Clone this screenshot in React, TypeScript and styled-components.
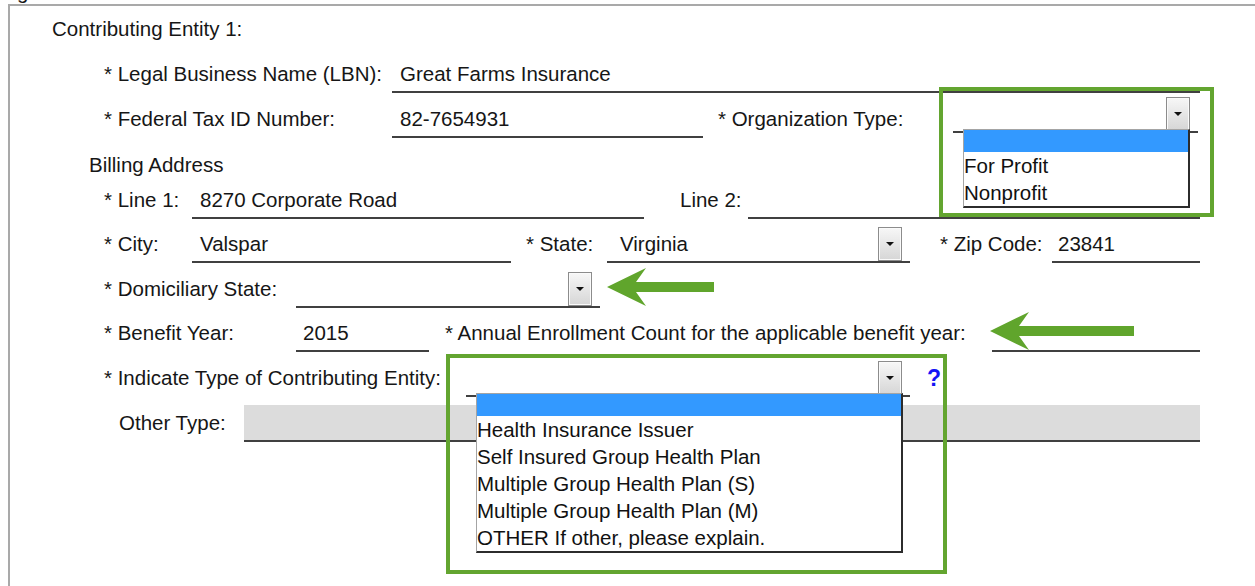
import styled, { createGlobalStyle } from "styled-components";

const GlobalStyle = createGlobalStyle`
  *, *::before, *::after {
    box-sizing: border-box;
  }

  html,
  body {
    margin: 0;
    background: #ffffff;
    overflow: hidden;
  }

  body {
    font-family: "Liberation Sans", Arial, sans-serif;
    font-size: 20.5px;
    color: #161616;
  }
`;

const Page = styled.div`
  position: relative;
  width: 1255px;
  height: 586px;
  overflow: hidden;
`;

// tail of the page heading, cut off by the top of the view
const TopStrip = styled.div`
  height: 4px;
  overflow: hidden;
  padding-left: 17px;
  line-height: 24px;

  span {
    display: block;
    margin-top: -20px;
  }
`;

const Frame = styled.div`
  position: relative;
  margin-left: 8px;
  width: 1300px;
  height: 620px;
  border-top: 2px solid #a9a9a9;
  border-left: 2px solid #a9a9a9;
`;

const Row = styled.div<{ $h: number; $indent: number }>`
  display: flex;
  align-items: flex-end;
  height: ${(p) => p.$h}px;
  padding-left: ${(p) => p.$indent}px;
`;

const Label = styled.div<{ $w?: number; $gap?: number }>`
  flex: none;
  width: ${(p) => (p.$w ? `${p.$w}px` : "auto")};
  margin-left: ${(p) => p.$gap ?? 0}px;
  line-height: 24px;
  padding-bottom: 5px;
  border-bottom: 2px solid transparent;
  white-space: nowrap;
`;

const Input = styled.div<{ $w: number; $pad?: number }>`
  flex: none;
  width: ${(p) => p.$w}px;
  padding-left: ${(p) => p.$pad ?? 8}px;
  line-height: 24px;
  padding-bottom: 5px;
  border-bottom: 2px solid #404040;
  white-space: nowrap;
`;

const Shaded = styled.div<{ $w: number }>`
  flex: none;
  width: ${(p) => p.$w}px;
  height: 37px;
  background: #dcdcdc;
  border-bottom: 2px solid #404040;
`;

const Select = styled.div<{ $w: number; $pad?: number; $lift?: number }>`
  position: relative;
  flex: none;
  display: flex;
  align-items: flex-end;
  justify-content: space-between;
  width: ${(p) => p.$w}px;
  height: 36px;
  margin-bottom: ${(p) => p.$lift ?? 0}px;
  padding-left: ${(p) => p.$pad ?? 8}px;
  padding-right: 8px;
  border-bottom: 2px solid #404040;
`;

const SelectValue = styled.span`
  line-height: 24px;
  padding-bottom: 5px;
  white-space: nowrap;
`;

const DropButton = styled.span`
  flex: none;
  display: flex;
  align-items: center;
  justify-content: center;
  width: 24px;
  height: 34px;
  border: 1px solid #8c8c8c;
  box-shadow: inset 0 0 0 1px #fafafa;
  background: linear-gradient(#f7f7f7, #d6d6d6);

  &::after {
    content: "";
    border-left: 4px solid transparent;
    border-right: 4px solid transparent;
    border-top: 4px solid #111111;
  }
`;

const OptionList = styled.ul<{ $left: number; $right: number }>`
  position: absolute;
  z-index: 2;
  top: calc(100% - 2px);
  left: ${(p) => p.$left}px;
  right: ${(p) => p.$right}px;
  margin: 0;
  padding: 0;
  list-style: none;
  background: #ffffff;
  border-top: 1px solid #a4a4a4;
  border-left: 1px solid #a4a4a4;
  border-right: 2px solid #2c2c2c;
  border-bottom: 2px solid #2c2c2c;
`;

const Option = styled.li<{ $active?: boolean }>`
  height: ${(p) => (p.$active ? 22 : 27)}px;
  line-height: 27px;
  padding-left: 0;
  white-space: nowrap;
  color: #111111;
  background: ${(p) => (p.$active ? "#3399ff" : "transparent")};
`;

const Help = styled.span`
  margin-left: 17px;
  font-size: 23px;
  line-height: 24px;
  padding-bottom: 7px;
  font-weight: bold;
  color: #1414f5;
`;

const Callout = styled.div<{ $x: number; $y: number; $w: number; $h: number }>`
  position: absolute;
  z-index: 3;
  left: ${(p) => p.$x}px;
  top: ${(p) => p.$y}px;
  width: ${(p) => p.$w}px;
  height: ${(p) => p.$h}px;
  border: 4px solid #63a530;
  pointer-events: none;
`;

const ArrowMark = styled.svg<{ $x: number; $y: number }>`
  position: absolute;
  z-index: 3;
  left: ${(p) => p.$x}px;
  top: ${(p) => p.$y}px;
  overflow: visible;
`;

function Arrow({ x, y, length }: { x: number; y: number; length: number }) {
  const pts = `0,19 39,0 29,14 ${length},14 ${length},24 29,24 39,38`;
  return (
    <ArrowMark $x={x} $y={y} width={length} height={38} viewBox={`0 0 ${length} 38`}>
      <polygon points={pts} fill="#60a52c" />
    </ArrowMark>
  );
}

const orgTypes = ["For Profit", "Nonprofit"];
const entityTypes = [
  "Health Insurance Issuer",
  "Self Insured Group Health Plan",
  "Multiple Group Health Plan (S)",
  "Multiple Group Health Plan (M)",
  "OTHER If other, please explain.",
];

export default function App() {
  return (
    <Page>
      <GlobalStyle />
      <TopStrip>
        <span>g</span>
      </TopStrip>
      <Frame>
        <Row $h={42} $indent={42}>
          <Label>Contributing Entity 1:</Label>
        </Row>

        <Row $h={45} $indent={94}>
          <Label $w={288}>* Legal Business Name (LBN):</Label>
          <Input $w={808}>Great Farms Insurance</Input>
        </Row>

        <Row $h={45} $indent={94}>
          <Label $w={288}>* Federal Tax ID Number:</Label>
          <Input $w={311}>82-7654931</Input>
          <Label $w={235} $gap={15}>
            * Organization Type:
          </Label>
          <Select $w={245} $lift={5}>
            <SelectValue />
            <DropButton />
            <OptionList $left={10} $right={8}>
              <Option $active />
              {orgTypes.map((t) => (
                <Option key={t}>{t}</Option>
              ))}
            </OptionList>
          </Select>
        </Row>

        <Row $h={46} $indent={79}>
          <Label>Billing Address</Label>
        </Row>

        <Row $h={35} $indent={94}>
          <Label $w={88}>* Line 1:</Label>
          <Input $w={452}>8270 Corporate Road</Input>
          <Label $w={68} $gap={36}>
            Line 2:
          </Label>
          <Input $w={452} />
        </Row>

        <Row $h={44} $indent={94}>
          <Label $w={88}>* City:</Label>
          <Input $w={319}>Valspar</Input>
          <Label $w={81} $gap={15}>
            * State:
          </Label>
          <Select $w={303} $pad={13}>
            <SelectValue>Virginia</SelectValue>
            <DropButton />
          </Select>
          <Label $w={112} $gap={30}>
            * Zip Code:
          </Label>
          <Input $w={148} $pad={6}>
            23841
          </Input>
        </Row>

        <Row $h={45} $indent={94}>
          <Label $w={192}>* Domiciliary State:</Label>
          <Select $w={304}>
            <SelectValue />
            <DropButton />
          </Select>
        </Row>

        <Row $h={44} $indent={94}>
          <Label $w={192}>* Benefit Year:</Label>
          <Input $w={133} $pad={7}>
            2015
          </Input>
          <Label $w={547} $gap={16}>
            * Annual Enrollment Count for the applicable benefit year:
          </Label>
          <Input $w={208} />
        </Row>

        <Row $h={45} $indent={94}>
          <Label $w={362}>* Indicate Type of Contributing Entity:</Label>
          <Select $w={444}>
            <SelectValue />
            <DropButton />
            <OptionList $left={10} $right={7}>
              <Option $active />
              {entityTypes.map((t) => (
                <Option key={t}>{t}</Option>
              ))}
            </OptionList>
          </Select>
          <Help>?</Help>
        </Row>

        <Row $h={45} $indent={109}>
          <Label $w={125}>Other Type:</Label>
          <Shaded $w={956} />
        </Row>

        <Callout $x={929} $y={81} $w={275} $h={130} />
        <Callout $x={436} $y={348} $w={501} $h={220} />
        <Arrow x={597} y={262} length={107} />
        <Arrow x={980} y={306} length={144} />
      </Frame>
    </Page>
  );
}
